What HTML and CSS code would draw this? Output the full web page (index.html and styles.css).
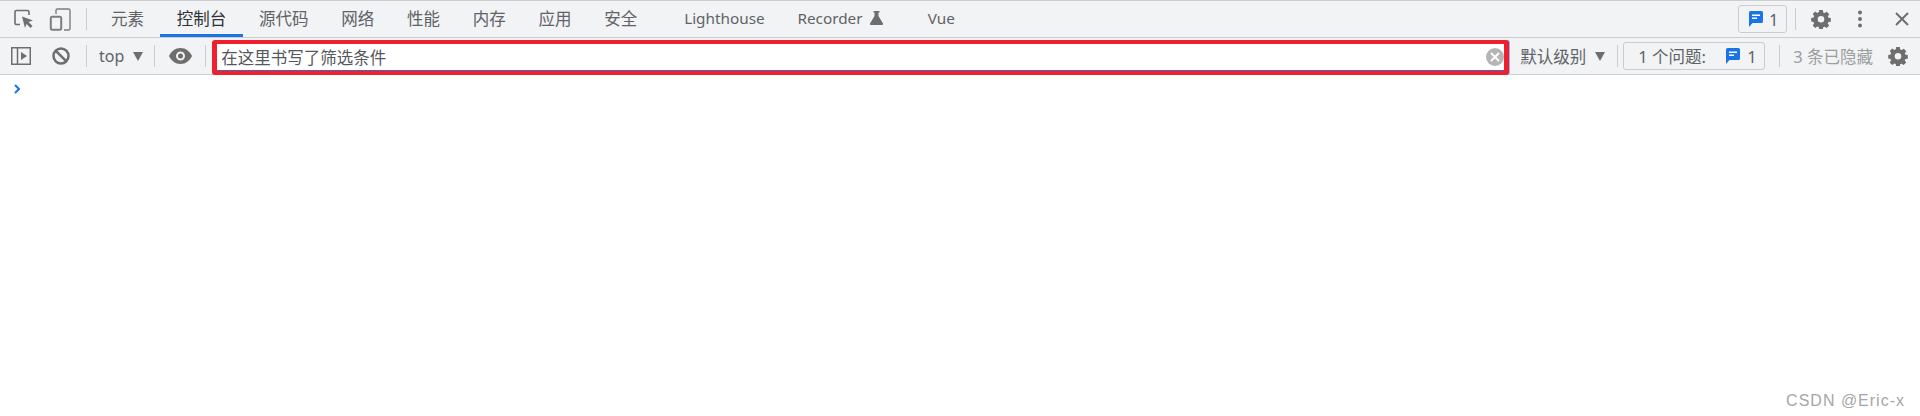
FILE: index.html
```html
<!DOCTYPE html>
<html lang="zh-CN">
<head>
    <meta charset="UTF-8">
    <title>DevTools 控制台</title>
    <link rel="stylesheet" href="styles.css">
</head>
<body>
    <svg class="sprites" width="0" height="0">
        <defs>
            <symbol id="gear" viewBox="0 0 20 20">
                <path fill-rule="evenodd" d="M8 0h4l.5 2.8 1.6.7L16.500 2l2.800 2.800-1.600 2.300.7 1.600 2.600.5v4l-2.700.5-.7 1.600 1.600 2.300-2.800 2.800-2.400-1.600-1.600.6-.4 2.600H8l-.5-2.700-1.600-.6L3.500 20.200.7 17.400l1.600-2.300-.7-1.600L-1 13V9l2.700-.5.6-1.600L.7 4.600 3.500 1.800l2.400 1.600 1.600-.7L8 0zm2 6.800a3.700 3.700 0 1 0 0 7.400 3.700 3.700 0 0 0 0-7.400z" transform="translate(1.1 .9) scale(.89)"/>
            </symbol>
            <symbol id="msg" viewBox="0 0 14 16">
                <path fill="#1a73e8" d="M1.500 0h11A1.500 1.500 0 0 1 14 1.500v9a1.500 1.500 0 0 1-1.500 1.500H3.500L0 16V1.500A1.500 1.500 0 0 1 1.500 0z"/>
                <path fill="#fff" d="M3 3.500h8V5H3zM3 6.500h5V8H3z"/>
            </symbol>
        </defs>
    </svg>

    <header class="tab-bar">
        <div class="tool-icons">
            <svg class="icon" width="20" height="20" viewBox="0 0 20 20" fill="none">
                <path d="M6 15.500H2.500A1.500 1.500 0 0 1 1 14V3a1.500 1.500 0 0 1 1.500-1.500h11A1.500 1.500 0 0 1 15 3v3" stroke="#6e6e6e" stroke-width="1.600"/>
                <path d="M8 7.500l11 4-4.500 1.500 4 4-2 2-4-4L11 19z" fill="#6e6e6e"/>
            </svg>
            <svg class="icon" width="22" height="23" viewBox="0 0 22 23" fill="none">
                <path d="M7 6V2.500A1.500 1.500 0 0 1 8.500 1h11A1.500 1.500 0 0 1 21 2.500v18a1.500 1.500 0 0 1-1.500 1.500H15" stroke="#7d7d7d" stroke-width="1.400"/>
                <rect x="1.800" y="8.800" width="10.400" height="13" rx="1.500" stroke="#7d7d7d" stroke-width="2"/>
            </svg>
        </div>
        <span class="sep sep-tall"></span>
        <nav class="tabs">
            <a class="tab">元素</a>
            <a class="tab active">控制台</a>
            <a class="tab">源代码</a>
            <a class="tab">网络</a>
            <a class="tab">性能</a>
            <a class="tab">内存</a>
            <a class="tab">应用</a>
            <a class="tab">安全</a>
            <a class="tab tab-latin tab-lighthouse">Lighthouse</a>
            <a class="tab tab-latin">Recorder
                <svg width="13" height="14" viewBox="0 0 13 14"><path fill="#6e6e6e" d="M3.500 0h6v1.500H8.500v3.500L13 12.500a1 1 0 0 1-.9 1.500H.9A1 1 0 0 1 0 12.500L4.500 5V1.500h-1z"/></svg>
            </a>
            <a class="tab tab-latin tab-vue">Vue</a>
        </nav>
        <div class="tab-right">
            <div class="badge">
                <svg width="14" height="16"><use href="#msg"/></svg>
                <span>1</span>
            </div>
            <span class="sep sep-badge"></span>
            <svg class="icon solid gear-top" width="20" height="20"><use href="#gear"/></svg>
            <svg class="icon solid dots" width="6" height="18" viewBox="0 0 6 18"><circle cx="3" cy="2.500" r="2"/><circle cx="3" cy="9" r="2"/><circle cx="3" cy="15.500" r="2"/></svg>
            <svg class="icon close" width="14" height="14" viewBox="0 0 14 14"><path d="M1 1l12 12M13 1L1 13" stroke="#6e6e6e" stroke-width="2" fill="none"/></svg>
        </div>
    </header>

    <section class="filter-bar">
        <svg class="icon dock" width="20" height="18" viewBox="0 0 20 18" fill="none">
            <rect x=".75" y=".75" width="18.500" height="16.500" stroke="#6e6e6e" stroke-width="1.500"/>
            <path d="M6.500 1v16" stroke="#6e6e6e" stroke-width="1.500"/>
            <path d="M10 5l6 4-6 4z" fill="#6e6e6e"/>
        </svg>
        <svg class="icon block" width="18" height="18" viewBox="0 0 18 18" fill="none">
            <circle cx="9" cy="9" r="7.500" stroke="#6e6e6e" stroke-width="2.500"/>
            <path d="M3.800 3.800l10.400 10.400" stroke="#6e6e6e" stroke-width="2.500"/>
        </svg>
        <span class="sep sep-a"></span>
        <div class="context">top<i class="arrow"></i></div>
        <span class="sep sep-b"></span>
        <svg class="icon eye" width="23" height="16" viewBox="0 0 23 16">
            <path fill="#6e6e6e" fill-rule="evenodd" d="M11.500 0C6.300 0 2.200 3.300 0 8c2.200 4.700 6.300 8 11.500 8S20.800 12.700 23 8c-2.200-4.700-6.300-8-11.500-8zm0 3.500a4.500 4.500 0 1 1 0 9 4.500 4.500 0 0 1 0-9zm0 2a2.500 2.500 0 1 0 0 5 2.500 2.500 0 0 0 0-5z"/>
        </svg>
        <span class="sep sep-c"></span>
        <div class="filter-box">
            <span class="filter-text">在这里书写了筛选条件</span>
            <svg class="clear" width="18" height="18" viewBox="0 0 18 18">
                <circle cx="9" cy="9" r="9" fill="#b5b5b5"/>
                <path d="M5 5l8 8M13 5l-8 8" stroke="#fff" stroke-width="2"/>
            </svg>
        </div>
        <div class="level">默认级别<i class="arrow"></i></div>
        <span class="sep sep-d"></span>
        <div class="issues">
            <span class="issues-label">1 个问题:</span>
            <svg width="14" height="16"><use href="#msg"/></svg>
            <span>1</span>
        </div>
        <span class="sep sep-e"></span>
        <span class="hidden-count">3 条已隐藏</span>
        <svg class="icon solid gear-bottom" width="20" height="20"><use href="#gear"/></svg>
    </section>

    <main class="console">
        <svg class="prompt" width="7" height="10" viewBox="0 0 7 10" fill="none"><path d="M1 1l4 4-4 4" stroke="#1a73e8" stroke-width="2"/></svg>
    </main>

    <div class="watermark">CSDN @Eric-x</div>
</body>
</html>
```

FILE: styles.css
```css
* {
    box-sizing: border-box;
}

html, body {
    height: 100%;
}

body {
    margin: 0;
    background: #fff;
    color: #5f6368;
    font-family: "Noto Sans", "Noto Sans CJK SC", sans-serif;
    font-size: 16.5px;
    overflow: hidden;
}

.sprites {
    display: block;
    height: 0;
}

.icon {
    flex: none;
}

.solid {
    fill: #6e6e6e;
}

.sep {
    flex: none;
    width: 1px;
    height: 22px;
    background: #ccc;
}

/* top row */
.tab-bar {
    display: flex;
    align-items: center;
    height: 38px;
    background: #f1f3f4;
    border-top: 1px solid #ccced3;
    border-bottom: 1px solid #cbcdd1;
}

.tool-icons {
    display: flex;
    align-items: center;
    padding-left: 14px;
    gap: 15px;
}

.sep-tall {
    margin-left: 15px;
}

.tabs {
    display: flex;
    align-self: stretch;
    margin-left: 7.5px;
}

.tab {
    display: flex;
    align-items: center;
    gap: 7px;
    padding: 0 16.4px 2px;
    white-space: nowrap;
}

.tab.active {
    color: #303236;
    box-shadow: inset 0 -3px 0 #1a73e8;
}

.tab-latin {
    font-size: 15.3px;
}

.tab-lighthouse {
    margin-left: 14px;
}

.tab-vue {
    margin-left: 12.5px;
}

.tab-right {
    display: flex;
    align-items: center;
    margin-left: auto;
}

.badge {
    display: flex;
    align-items: center;
    gap: 6px;
    height: 28px;
    width: 49px;
    padding-left: 10px;
    border: 1px solid #ccc;
    border-radius: 3px;
}

.sep-badge {
    margin-left: 8px;
}

.gear-top {
    margin-left: 15px;
}

.dots {
    margin-left: 26px;
}

.close {
    margin-left: 32px;
    margin-right: 11px;
}

/* filter row */
.filter-bar {
    display: flex;
    align-items: center;
    height: 37px;
    background: #f1f3f4;
    border-bottom: 1px solid #cbcdd1;
}

.dock {
    margin-left: 11px;
}

.block {
    margin-left: 21px;
}

.sep-a {
    margin-left: 16px;
}

.context {
    display: flex;
    align-items: center;
    margin-left: 12px;
    font-size: 16px;
}

.arrow {
    width: 0;
    height: 0;
    margin-left: 9px;
    border-left: 5px solid transparent;
    border-right: 5px solid transparent;
    border-top: 9px solid #6e6e6e;
}

.sep-b {
    margin-left: 11px;
}

.eye {
    margin-left: 14px;
}

.sep-c {
    margin-left: 13px;
}

.filter-box {
    display: flex;
    align-items: center;
    justify-content: space-between;
    flex: 1;
    align-self: flex-start;
    height: 35px;
    margin: 2px 0 -1px 6px;
    padding: 0 0 2px 4px;
    background: #fff;
    border-style: solid;
    border-color: #f01f2d;
    border-width: 4px 5px;
    border-radius: 3px;
    box-shadow: inset 0 -1px 0 #4b64a8, 1px 0 0 #8ab4f8;
}

.filter-text {
    color: #55585c;
}

.level {
    display: flex;
    align-items: center;
    margin-left: 11px;
}

.sep-d {
    margin-left: 12px;
}

.issues {
    display: flex;
    align-items: center;
    width: 142px;
    height: 28px;
    margin-left: 5px;
    padding-left: 14px;
    border: 1px solid #ccc;
    border-radius: 3px;
}

.issues-label {
    width: 88px;
    white-space: nowrap;
}

.issues svg {
    margin-right: 7px;
}

.sep-e {
    margin-left: 14px;
}

.hidden-count {
    margin-left: 13px;
    color: #9a9da1;
    white-space: nowrap;
}

.gear-bottom {
    margin-left: 15px;
    margin-right: 12px;
}

/* console */
.console {
    padding: 9px 14px;
}

.prompt {
    display: block;
}

.watermark {
    position: absolute;
    right: 15px;
    bottom: 6px;
    color: #a6a6a6;
    font-family: "Liberation Sans", sans-serif;
    font-size: 16px;
    letter-spacing: 1px;
}
```
